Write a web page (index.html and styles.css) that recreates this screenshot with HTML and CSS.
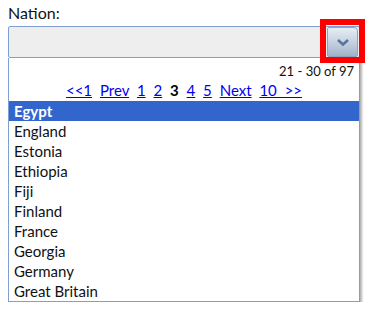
FILE: index.html
```html
<!DOCTYPE html>
<html>
<head>
<meta charset="utf-8">
<link rel="stylesheet" href="styles.css">
</head>
<body>
<div class="label">Nation:</div>
<div class="combo">
  <div class="btn">
    <svg width="14" height="9" viewBox="0 0 14 9"><path d="M2 2 L7 6.5 L12 2" fill="none" stroke="#5b7396" stroke-width="2.6"/></svg>
  </div>
</div>
<div class="panel">
  <div class="info">21 - 30 of 97</div>
  <div class="pager">
    <a href="#">&lt;&lt;1</a>
    <a href="#">Prev</a>
    <a href="#">1</a>
    <a href="#">2</a>
    <span class="cur">3</span>
    <a href="#">4</a>
    <a href="#">5</a>
    <a href="#">Next</a>
    <a href="#">10 &gt;&gt;</a>
  </div>
  <ul class="list">
    <li class="sel">Egypt</li>
    <li>England</li>
    <li>Estonia</li>
    <li>Ethiopia</li>
    <li>Fiji</li>
    <li>Finland</li>
    <li>France</li>
    <li>Georgia</li>
    <li>Germany</li>
    <li>Great Britain</li>
  </ul>
</div>
</body>
</html>
```
FILE: styles.css
```css
html, body { margin: 0; padding: 0; background: #fff; }
body {
  font-family: Lato, "Open Sans", sans-serif;
  color: #111;
  padding: 4px 10px 0 8px;
}
.label {
  font-size: 16px;
  line-height: 18px;
  height: 22px;
}
.combo {
  box-sizing: border-box;
  height: 32px;
  border: 1px solid #7f9fd0;
  border-radius: 2px;
  background: #eeeeee;
  display: flex;
  justify-content: flex-end;
  align-items: center;
  padding-right: 1px;
}
.btn {
  position: relative;
  box-sizing: border-box;
  width: 31px;
  height: 30px;
  border: 1px solid #8fa3bf;
  border-radius: 2px 4px 2px 2px;
  background: linear-gradient(#e6edf5, #c9d5e3 45%, #a2b3c9);
  display: flex;
  align-items: center;
  justify-content: center;
}
.btn::after {
  content: "";
  position: absolute;
  top: -9px;
  bottom: -7px;
  left: -8px;
  right: -8px;
  border: 6px solid #ff0000;
}
.panel {
  box-sizing: border-box;
  border: 1px solid #7f9fd0;
  border-top: none;
  background: #fff;
  box-shadow: 2px 2px 2px rgba(0,0,0,0.3);
  height: 244px;
}
.info {
  text-align: right;
  font-size: 13px;
  line-height: 18px;
  height: 22px;
  padding-right: 5px;
  padding-top: 4px;
  box-sizing: border-box;
}
.pager {
  text-align: center;
  font-size: 15px;
  line-height: 20px;
  height: 21px;
  word-spacing: 4px;
}
.pager a { color: #0000ee; text-decoration: underline; }
.pager .cur { font-weight: bold; color: #000; }
.list {
  list-style: none;
  margin: 0;
  padding: 0;
}
.list li {
  font-size: 15px;
  line-height: 20px;
  height: 20px;
  padding-left: 5px;
}
.list li.sel {
  background: #3366cc;
  color: #fff;
  font-weight: bold;
}
```
